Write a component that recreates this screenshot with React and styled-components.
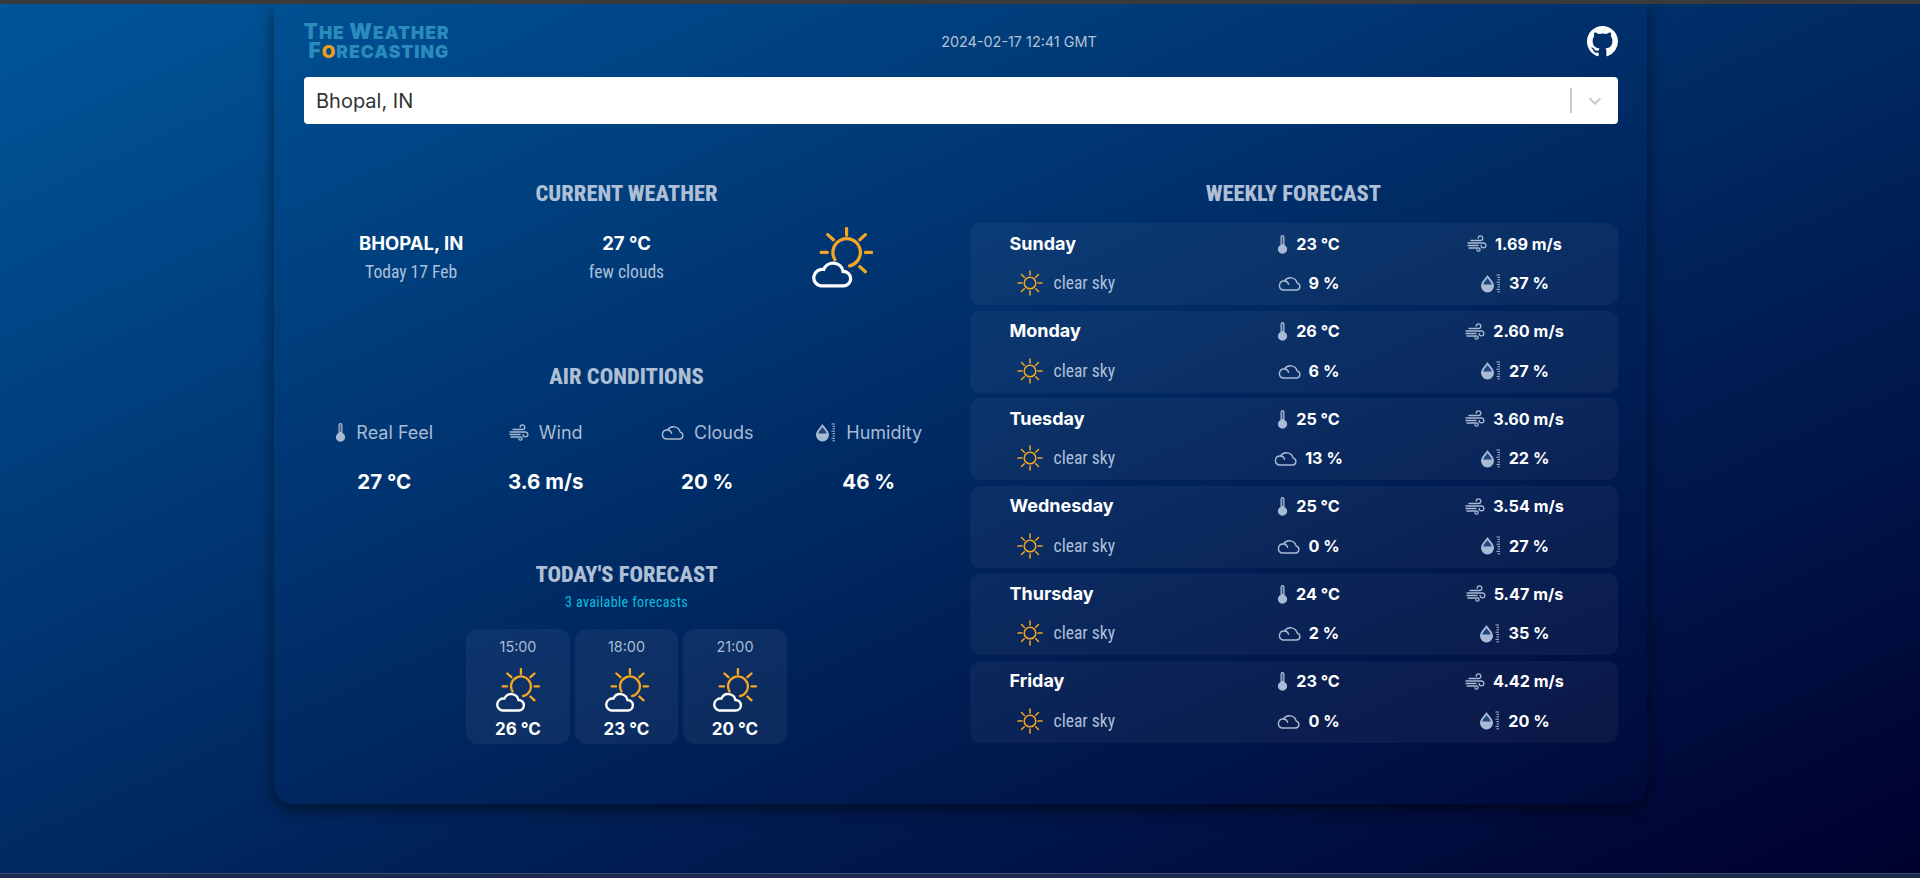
import React from 'react';
import styled, { createGlobalStyle } from 'styled-components';

const Global = createGlobalStyle`
  html, body {
    margin: 0;
    height: 100%;
    overflow: hidden;
    background: #1c2a50;
  }
  * { box-sizing: border-box; }
`;

const TEXT = '"Inter", "Noto Sans", sans-serif';
const COND = '"Roboto Condensed", "Liberation Sans Narrow", Roboto, sans-serif';

const TopStrip = styled.div`
  height: 4px;
  background: #3a3a3a;
`;
const BottomStrip = styled.div`
  height: 5px;
  background: #1c2a50;
  border-top: 1px solid #3f4c72;
`;
const Page = styled.main`
  height: 869px;
  overflow: hidden;
  background: linear-gradient(to bottom right, #00569a 0%, #002c66 47%, #00002e 100%);
`;
const Card = styled.section`
  width: 1373px;
  height: 800px;
  margin: 0 auto;
  padding: 0 29px 0 30px;
  border-radius: 0 0 20px 20px;
  box-shadow: 0 6px 16px rgba(0, 0, 0, 0.5);
`;
const Header = styled.header`
  height: 73px;
  display: flex;
  justify-content: space-between;
  align-items: center;
  padding-top: 2px;
`;
const Logo = styled.div`
  width: 148px;
  font-family: ${TEXT};
  font-weight: 900;
  font-size: 17.5px;
  line-height: 18px;
  letter-spacing: 1px;
  text-transform: uppercase;
  color: #2a8cbb;
`;
const LogoLine = styled.div`
  padding-left: ${(p) => p.$indent || 0}px;
  white-space: nowrap;
`;
const LogoCap = styled.span`
  font-size: 21px;
`;
const LogoRing = styled.span`
  color: #e89f1c;
`;
const DateText = styled.div`
  font-family: ${TEXT};
  font-size: 14.4px;
  color: #b3c2d8;
`;
const GithubLink = styled.a`
  display: flex;
  color: #fff;
`;
const SelectBox = styled.div`
  height: 47px;
  background: #fff;
  border-radius: 4px;
  display: flex;
  align-items: center;
  padding-left: 12.5px;
  font-family: ${TEXT};
  font-size: 20px;
  color: #333;
`;
const SelectValue = styled.div`
  flex: 1;
`;
const SelectDivider = styled.div`
  width: 2px;
  height: 25px;
  background: #ccc;
`;
const SelectArrow = styled.div`
  width: 46px;
  display: flex;
  justify-content: center;
  color: #ccc;
`;
const Columns = styled.div`
  display: grid;
  grid-template-columns: 1fr 1fr;
  gap: 20px;
  margin-top: 56px;
`;
const Column = styled.div`
  display: flex;
  flex-direction: column;
`;
const Title = styled.h2`
  margin: ${(p) => p.$top || 0}px 0 0;
  font-family: ${COND};
  font-stretch: 75%;
  font-weight: 800;
  font-size: 22.5px;
  line-height: 27px;
  text-align: center;
  text-transform: uppercase;
  color: #aebfd6;
`;
const CurrentRow = styled.div`
  display: grid;
  grid-template-columns: repeat(3, 1fr);
  margin-top: 24px;
  height: 60px;
`;
const CurrentCell = styled.div`
  display: flex;
  flex-direction: column;
  align-items: center;
`;
const IconCell = styled.div`
  display: flex;
  justify-content: center;
  margin-top: -4px;
  margin-left: 2px;
`;
const Strong = styled.div`
  font-family: ${TEXT};
  font-weight: 700;
  font-size: ${(p) => p.$size || 18.5}px;
  line-height: ${(p) => p.$line || 24}px;
  color: #fff;
  white-space: nowrap;
`;
const CondText = styled.div`
  margin-top: ${(p) => p.$top || 0}px;
  font-family: ${COND};
  font-stretch: 75%;
  font-size: 17.6px;
  line-height: 22px;
  color: ${(p) => p.$color || '#adc0da'};
  white-space: nowrap;
`;
const AirGrid = styled.div`
  display: grid;
  grid-template-columns: repeat(4, 1fr);
  margin-top: 30px;
`;
const AirItem = styled.div`
  display: flex;
  flex-direction: column;
  align-items: center;
  gap: 24px;
`;
const AirLabel = styled.div`
  display: flex;
  align-items: center;
  gap: 10px;
  height: 24px;
  font-family: ${TEXT};
  font-size: 18px;
  color: #a9bbd4;
`;
const Subtitle = styled.div`
  margin-top: 5px;
  font-family: ${COND};
  font-stretch: 75%;
  font-size: 14px;
  line-height: 18px;
  letter-spacing: 0.4px;
  text-align: center;
  color: #09bfe0;
`;
const HourRow = styled.div`
  display: flex;
  justify-content: center;
  gap: 5px;
  margin-top: 18px;
`;
const HourCard = styled.div`
  width: 103.5px;
  height: 115px;
  padding-top: 8px;
  border-radius: 12px;
  background: rgba(255, 255, 255, 0.05);
  display: flex;
  flex-direction: column;
  align-items: center;
`;
const HourTime = styled.div`
  font-family: ${TEXT};
  font-size: 14.4px;
  line-height: 20px;
  margin-bottom: 11px;
  color: #a9bbd4;
`;
const HourTemp = styled(Strong)`
  margin-top: 5px;
`;
const WeekList = styled.div`
  display: grid;
  grid-auto-rows: 82px;
  row-gap: 5.5px;
  margin-top: 16px;
`;
const WeekRow = styled.div`
  display: grid;
  grid-template-columns: repeat(3, 206px);
  grid-template-rows: repeat(2, 1fr);
  padding: 1px 0 2px 30px;
  border-radius: 10px;
  background: rgba(255, 255, 255, 0.045);
`;
const DayName = styled(Strong)`
  padding-left: 10px;
  align-self: center;
`;
const SkyCell = styled.div`
  display: flex;
  align-items: center;
  gap: 11px;
  padding-left: 17px;
`;
const StatCell = styled.div`
  display: flex;
  align-items: center;
  justify-content: center;
  gap: 8px;
`;
const StatValue = styled(Strong)`
  font-size: 16.2px;
`;

const Ray = styled.path`
  stroke: ${(p) => p.$color};
  fill: none;
  stroke-linecap: round;
`;

const FewClouds = ({ size }) => (
  <svg width={size} height={size} viewBox="0 0 60 60" fill="none" strokeWidth="3.2" strokeLinecap="round">
    <Ray $color="#f5a623" d="M22.5 32A13.5 13.5 0 1 1 37 38.2M34 1.5V8M52.5 25H58.5M9 25H15M15.5 7.5L21 12.5M52.5 7.5L47 12.5M47 39L52.5 44" />
    <Ray $color="#fff" d="M8.5 58H31A7.2 7.2 0 0 0 30.6 43.6A10 10 0 0 0 11.5 41.8A8.2 8.2 0 0 0 8.5 58Z" />
  </svg>
);

const ClearSun = () => (
  <svg width="26" height="26" viewBox="0 0 26 26" fill="none" strokeWidth="1.5" strokeLinecap="round">
    <Ray $color="#f5a623" d="M13 1V5M13 21V25M1 13H5M21 13H25M4.5 4.5L7.3 7.3M21.5 4.5L18.7 7.3M4.5 21.5L7.3 18.7M21.5 21.5L18.7 18.7" />
    <circle cx="13" cy="13" r="5.8" stroke="#f5a623" />
  </svg>
);

const Thermometer = () => (
  <svg width="11" height="20" viewBox="0 0 11 20">
    <path d="M3.5 11V3a2 2 0 0 1 4 0v8a4.6 4.6 0 1 1-4 0Z" fill="#a9bbd4" />
    <path d="M4.7 3a.8.8 0 0 1 1.6 0v7H4.7Z" fill="#3e5f8c" />
  </svg>
);

const WindIcon = () => (
  <svg width="20" height="17" viewBox="0 0 20 17" fill="none" stroke="#a9bbd4" strokeWidth="1.3" strokeLinecap="round">
    <path d="M4 5.5H13.5A2.3 2.3 0 1 0 11.2 3.2M1 8H16.5A2.4 2.4 0 1 1 14.1 10.4M1 10.5H11M2 13H11.5A1.6 1.6 0 1 1 9.9 14.6" />
  </svg>
);

const CloudIcon = () => (
  <svg width="23" height="16" viewBox="0 0 23 16" fill="none" stroke="#a9bbd4" strokeWidth="1.4" strokeLinecap="round" strokeLinejoin="round">
    <path d="M4.8 15H18.5a3.5 3.5 0 0 0 .7-6.9A7 7 0 0 0 6.5 6A4.6 4.6 0 0 0 4.8 15ZM6.5 6A4.2 4.2 0 0 1 10.5 9.2" />
  </svg>
);

const HumidityIcon = () => (
  <svg width="21" height="19" viewBox="0 0 21 19" fill="none">
    <path d="M7.5 1C5.5 4.2 1 8 1 12a6.5 6.5 0 0 0 13 0C14 8 9.5 4.2 7.5 1Z" fill="#a9bbd4" />
    <path d="M7.5 4C6.4 5.9 3.8 8.2 3.2 10.5H11.8C11.2 8.2 8.6 5.9 7.5 4Z" fill="#21477c" />
    <path d="M16.5 1H20M17.5 3.4H20M17.5 5.8H20M16.5 8.2H20M17.5 10.6H20M17.5 13H20M16.5 15.4H20M17.5 17.8H20" stroke="#a9bbd4" strokeWidth="1" />
  </svg>
);

const Chevron = () => (
  <svg width="20" height="20" viewBox="0 0 20 20" fill="currentColor">
    <path d="M4.5 7.2a1.1 1.1 0 0 1 1.6 0L10 11l3.9-3.8a1.1 1.1 0 0 1 1.6 1.6l-4.7 4.7a1.1 1.1 0 0 1-1.6 0L4.5 8.8a1.1 1.1 0 0 1 0-1.6Z" />
  </svg>
);

const GithubMark = () => (
  <svg width="31" height="31" viewBox="0 0 16 16" fill="currentColor">
    <path d="M8 0C3.58 0 0 3.58 0 8c0 3.54 2.29 6.53 5.47 7.59.4.07.55-.17.55-.38 0-.19-.01-.82-.01-1.49-2.01.37-2.53-.49-2.69-.94-.09-.23-.48-.94-.82-1.13-.28-.15-.68-.52-.01-.53.63-.01 1.08.58 1.23.82.72 1.21 1.87.87 2.33.66.07-.52.28-.87.51-1.07-1.78-.2-3.64-.89-3.64-3.95 0-.87.31-1.59.82-2.15-.08-.2-.36-1.02.08-2.12 0 0 .67-.21 2.2.82.64-.18 1.32-.27 2-.27.68 0 1.36.09 2 .27 1.53-1.04 2.2-.82 2.2-.82.44 1.1.16 1.92.08 2.12.51.56.82 1.27.82 2.15 0 3.07-1.87 3.75-3.65 3.95.29.25.54.73.54 1.48 0 1.07-.01 1.93-.01 2.2 0 .21.15.46.55.38A8.013 8.013 0 0016 8c0-4.42-3.58-8-8-8z" />
  </svg>
);

const air = [
  { label: 'Real Feel', value: '27 °C', Icon: Thermometer },
  { label: 'Wind', value: '3.6 m/s', Icon: WindIcon },
  { label: 'Clouds', value: '20 %', Icon: CloudIcon },
  { label: 'Humidity', value: '46 %', Icon: HumidityIcon },
];

const hours = [
  { time: '15:00', temp: '26 °C' },
  { time: '18:00', temp: '23 °C' },
  { time: '21:00', temp: '20 °C' },
];

const week = [
  { day: 'Sunday', temp: '23 °C', wind: '1.69 m/s', clouds: '9 %', humidity: '37 %' },
  { day: 'Monday', temp: '26 °C', wind: '2.60 m/s', clouds: '6 %', humidity: '27 %' },
  { day: 'Tuesday', temp: '25 °C', wind: '3.60 m/s', clouds: '13 %', humidity: '22 %' },
  { day: 'Wednesday', temp: '25 °C', wind: '3.54 m/s', clouds: '0 %', humidity: '27 %' },
  { day: 'Thursday', temp: '24 °C', wind: '5.47 m/s', clouds: '2 %', humidity: '35 %' },
  { day: 'Friday', temp: '23 °C', wind: '4.42 m/s', clouds: '0 %', humidity: '20 %' },
];

const App = () => {
  return (
    <>
      <Global />
      <TopStrip />
      <Page>
        <Card>
          <Header>
            <Logo>
              <LogoLine><LogoCap>T</LogoCap>he <LogoCap>W</LogoCap>eather</LogoLine>
              <LogoLine $indent={5}><LogoCap>F</LogoCap><LogoRing>o</LogoRing>recasting</LogoLine>
            </Logo>
            <DateText>2024-02-17 12:41 GMT</DateText>
            <GithubLink href="#">
              <GithubMark />
            </GithubLink>
          </Header>
          <SelectBox>
            <SelectValue>Bhopal, IN</SelectValue>
            <SelectDivider />
            <SelectArrow>
              <Chevron />
            </SelectArrow>
          </SelectBox>
          <Columns>
            <Column>
              <Title>Current weather</Title>
              <CurrentRow>
                <CurrentCell>
                  <Strong>BHOPAL, IN</Strong>
                  <CondText $top={6}>Today 17 Feb</CondText>
                </CurrentCell>
                <CurrentCell>
                  <Strong>27 °C</Strong>
                  <CondText $top={6}>few clouds</CondText>
                </CurrentCell>
                <IconCell>
                  <FewClouds size={61} />
                </IconCell>
              </CurrentRow>
              <Title $top={72}>Air conditions</Title>
              <AirGrid>
                {air.map(({ label, value, Icon }) => (
                  <AirItem key={label}>
                    <AirLabel>
                      <Icon />
                      {label}
                    </AirLabel>
                    <Strong $size={20.5} $line={28}>{value}</Strong>
                  </AirItem>
                ))}
              </AirGrid>
              <Title $top={65}>Today's forecast</Title>
              <Subtitle>3 available forecasts</Subtitle>
              <HourRow>
                {hours.map((h) => (
                  <HourCard key={h.time}>
                    <HourTime>{h.time}</HourTime>
                    <FewClouds size={44} />
                    <HourTemp $size={17}>{h.temp}</HourTemp>
                  </HourCard>
                ))}
              </HourRow>
            </Column>
            <Column>
              <Title>Weekly forecast</Title>
              <WeekList>
                {week.map((d) => (
                  <WeekRow key={d.day}>
                    <DayName $size={18}>{d.day}</DayName>
                    <StatCell>
                      <Thermometer />
                      <StatValue>{d.temp}</StatValue>
                    </StatCell>
                    <StatCell>
                      <WindIcon />
                      <StatValue>{d.wind}</StatValue>
                    </StatCell>
                    <SkyCell>
                      <ClearSun />
                      <CondText>clear sky</CondText>
                    </SkyCell>
                    <StatCell>
                      <CloudIcon />
                      <StatValue>{d.clouds}</StatValue>
                    </StatCell>
                    <StatCell>
                      <HumidityIcon />
                      <StatValue>{d.humidity}</StatValue>
                    </StatCell>
                  </WeekRow>
                ))}
              </WeekList>
            </Column>
          </Columns>
        </Card>
      </Page>
      <BottomStrip />
    </>
  );
};

export default App;
